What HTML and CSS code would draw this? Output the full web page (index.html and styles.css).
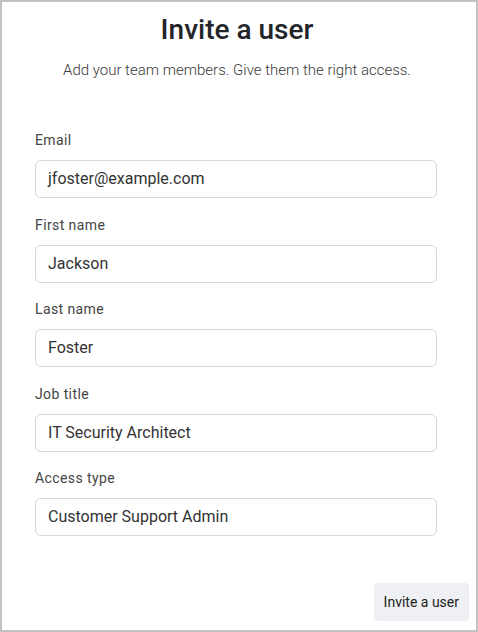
FILE: index.html
```html
<!DOCTYPE html>
<html lang="en">
<head>
<meta charset="utf-8">
<title>Invite a user</title>
<link rel="stylesheet" href="styles.css">
</head>
<body>
<div class="page">
  <header class="header">
    <h1 class="title">Invite a user</h1>
    <p class="subtitle">Add your team members. Give them the right access.</p>
  </header>
  <form class="form">
    <div class="field">
      <label class="label">Email</label>
      <div class="input">jfoster@example.com</div>
    </div>
    <div class="field">
      <label class="label">First name</label>
      <div class="input">Jackson</div>
    </div>
    <div class="field">
      <label class="label">Last name</label>
      <div class="input">Foster</div>
    </div>
    <div class="field">
      <label class="label">Job title</label>
      <div class="input">IT Security Architect</div>
    </div>
    <div class="field">
      <label class="label">Access type</label>
      <div class="input">Customer Support Admin</div>
    </div>
  </form>
  <footer class="footer">
    <button class="btn" type="button">Invite a user</button>
  </footer>
</div>
</body>
</html>
```

FILE: styles.css
```css
* { box-sizing: border-box; }
html, body { margin: 0; padding: 0; }
body {
  font-family: Roboto, "Liberation Sans", sans-serif;
  background: #fff;
  color: #333;
}
.page {
  width: 478px;
  height: 632px;
  border: 2px solid #c2c2c2;
  display: flex;
  flex-direction: column;
}
.header {
  text-align: center;
  padding: 11px 4px 0 0;
}
.title {
  margin: 0;
  font-size: 28px;
  line-height: 34px;
  font-weight: 500;
  color: #22252a;
}
.subtitle {
  margin: 13px 0 0;
  font-size: 15px;
  font-weight: 300;
  line-height: 20px;
  color: #3a3a3a;
}
.form {
  display: flex;
  flex-direction: column;
  gap: 16.5px;
  padding: 50px 0 0 33px;
}
.field {
  display: flex;
  flex-direction: column;
  gap: 10px;
}
.label {
  font-size: 14px;
  line-height: 20px;
  letter-spacing: 0.4px;
  color: #444;
}
.input {
  width: 402px;
  height: 38px;
  border: 1px solid #d2d8df;
  border-radius: 6px;
  padding: 0 12px;
  font-size: 16px;
  line-height: 36px;
  color: #333;
}
.footer {
  margin-top: auto;
  display: flex;
  justify-content: flex-end;
  padding: 0 7px 9px 0;
}
.btn {
  height: 38px;
  padding: 0 10px;
  border: none;
  border-radius: 4px;
  background: #eef0f3;
  font-family: Roboto, "Liberation Sans", sans-serif;
  font-size: 14px;
  color: #222;
}
```
